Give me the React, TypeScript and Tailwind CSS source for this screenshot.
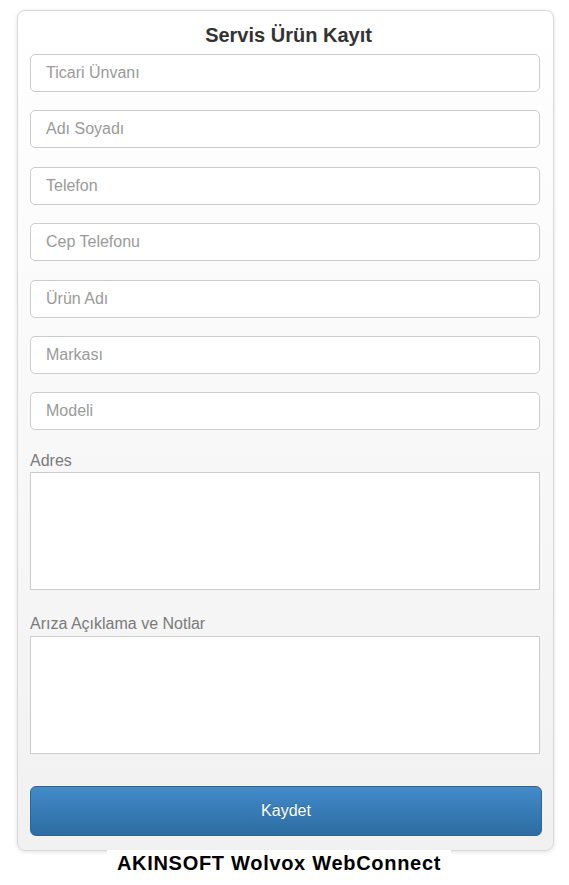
import React from 'react';

const fields = ['Ticari Ünvanı', 'Adı Soyadı', 'Telefon', 'Cep Telefonu', 'Ürün Adı', 'Markası', 'Modeli'];

export default function App() {
  return (
    <div className="min-h-[885px] w-[569px] bg-white font-['Liberation_Sans',Arial,sans-serif]">
      <div className="pt-[10px] pl-[17px]">
        <form
          className="w-[537px] rounded-[8px] border border-[#d8d8d8] bg-gradient-to-b from-[#ffffff] to-[#f1f1f1] px-[12px] pb-[14px] shadow-[0_1px_4px_rgba(0,0,0,0.12)]"
          onSubmit={(e) => e.preventDefault()}
        >
          <h1 className="mt-[12px] pl-[6px] text-center text-[20px] leading-[24px] font-bold text-[#333]">Servis Ürün Kayıt</h1>

          <div className="mt-[7px] flex flex-col gap-[18.4px]">
            {fields.map((f) => (
              <input
                key={f}
                type="text"
                placeholder={f}
                className="h-[38px] w-[510px] rounded-[5px] border border-[#cccccc] bg-white px-[15px] text-[16px] text-[#333] outline-none placeholder:text-[#9a9a9a]"
              />
            ))}
          </div>

          {/* adres */}
          <label className="mt-[20px] block text-[16px] leading-[22px] text-[#7a7a7a]">Adres</label>
          <textarea className="mt-0 block h-[118px] w-[510px] resize-none border border-[#cccccc] bg-white outline-none" />

          {/* arıza notları */}
          <label className="mt-[23px] block text-[16px] leading-[22px] text-[#7a7a7a]">Arıza Açıklama ve Notlar</label>
          <textarea className="mt-[1px] block h-[118px] w-[510px] resize-none border border-[#cccccc] bg-white outline-none" />

          <button
            type="submit"
            className="mt-[32px] block h-[50px] w-[512px] rounded-[6px] border border-[#2b669a] bg-gradient-to-b from-[#428bca] to-[#2d6ca2] text-[16px] text-white [text-shadow:0_-1px_0_rgba(0,0,0,0.2)]"
          >
            Kaydet
          </button>
        </form>
      </div>

      <div className="flex justify-center pr-[11px]">
        <div className="-mt-[1px] bg-white px-[10px] pt-[1px] text-[20px] leading-[24px] font-bold tracking-[0.7px] text-black">
          AKINSOFT Wolvox WebConnect
        </div>
      </div>
    </div>
  );
}
